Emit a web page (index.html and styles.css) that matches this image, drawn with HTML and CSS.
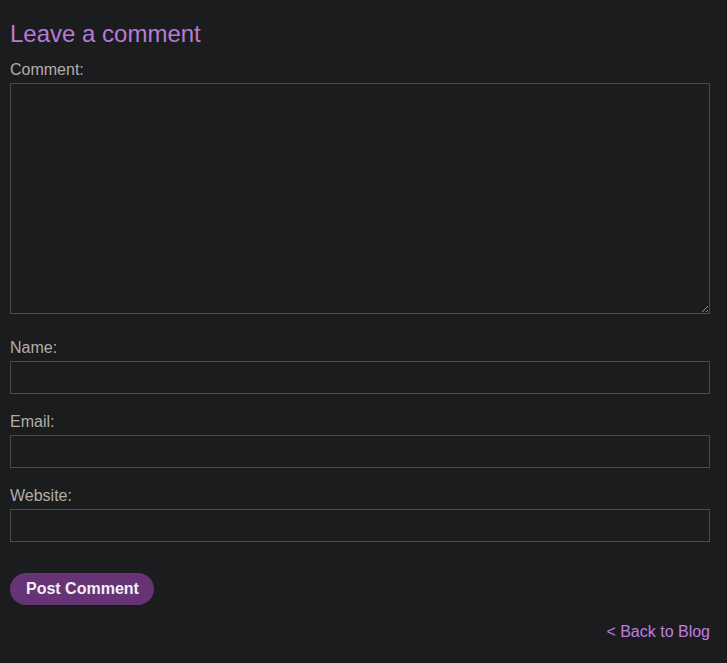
FILE: index.html
```html
<!DOCTYPE html>
<html lang="en">
<head>
    <meta charset="UTF-8">
    <meta name="viewport" content="width=device-width, initial-scale=1.0">
    <title>Leave a comment</title>
    <link rel="stylesheet" href="styles.css">
</head>
<body>
    <div class="comment-section">
        <h2 class="section-title">Leave a comment</h2>

        <form class="comment-form" onsubmit="return false;">
            <label class="field-label" for="comment">Comment:</label>
            <textarea class="field-area" id="comment" name="comment"></textarea>

            <label class="field-label" for="name">Name:</label>
            <input class="field-input" type="text" id="name" name="name">

            <label class="field-label" for="email">Email:</label>
            <input class="field-input" type="email" id="email" name="email">

            <label class="field-label" for="website">Website:</label>
            <input class="field-input" type="text" id="website" name="website">

            <button class="submit-btn" type="submit">Post Comment</button>
        </form>

        <div class="back-link">
            <a href="#">&lt; Back to Blog</a>
        </div>
    </div>
</body>
</html>
```

FILE: styles.css
```css
* {
    margin: 0;
    padding: 0;
    box-sizing: border-box;
    font-family: "Liberation Sans", Arial, sans-serif;
}

body {
    background-color: #1b1c1e;
    color: #b3ada6;
}

.comment-section {
    width: 700px;
    margin-left: 10px;
    padding-top: 20px;
}

.section-title {
    font-size: 24px;
    font-weight: normal;
    color: #b87ad8;
    margin-bottom: 13px;
}

.comment-form {
    display: flex;
    flex-direction: column;
}

.field-label {
    display: block;
    font-size: 16px;
    margin-bottom: 4px;
}

.field-area,
.field-input {
    display: block;
    width: 700px;
    background-color: #1b1c1e;
    border: 1px solid #4a4a4a;
    color: #ddd;
    font-size: 16px;
    outline: none;
}

.field-area {
    height: 231px;
    margin-bottom: 25px;
    resize: vertical;
}

.field-input {
    height: 33px;
    margin-bottom: 19px;
}

.comment-form .field-input:last-of-type {
    margin-bottom: 31px;
}

.submit-btn {
    align-self: flex-start;
    height: 32px;
    padding: 0 15px 0 16px;
    border: none;
    border-radius: 16px;
    background-color: #663377;
    color: #f2eef4;
    font-size: 16px;
    font-weight: bold;
    cursor: pointer;
}

.back-link {
    text-align: right;
    margin-top: 18px;
    font-size: 16px;
}

.back-link a {
    color: #c07ce0;
    text-decoration: none;
}
```
